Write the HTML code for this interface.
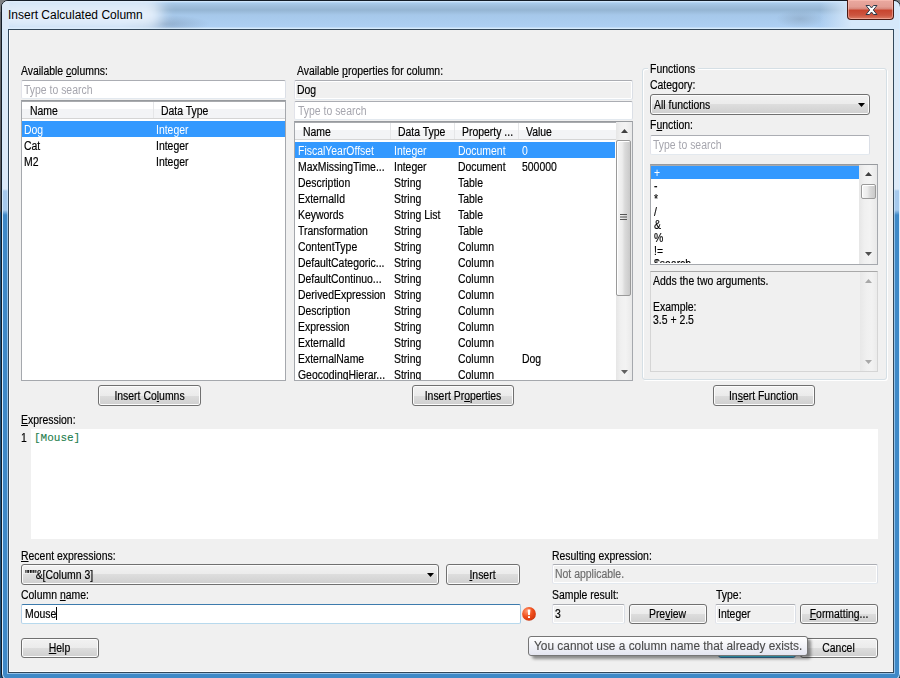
<!DOCTYPE html>
<html><head><meta charset="utf-8">
<style>
html,body{margin:0;padding:0;width:900px;height:678px;overflow:hidden;position:relative;background:linear-gradient(to bottom,#6b6d70 0,#55585c 211px,#1b4f7a 213px,#1b4f7a 100%);}
*{box-sizing:border-box;}
.a{position:absolute;}
.t{position:absolute;font-family:"Liberation Sans",sans-serif;font-size:12px;line-height:14px;white-space:nowrap;color:#000;transform:scaleX(.87);transform-origin:0 0;margin-top:-1px;-webkit-text-stroke:0.18px currentColor;}
.u{text-decoration:underline;}
.ph{color:#a6a6ae;-webkit-text-stroke:0;}
.tb{position:absolute;background:#fff;border:1px solid;border-color:#abadb3 #dbdfe6 #e3e9ef #e2e3ea;border-radius:2px;}
.ro{background:#f0f0f0;box-shadow:inset 0 0 0 1px #fff;}
.lst{position:absolute;background:#fff;border:1px solid #a5a8ad;border-top-color:#979a9e;box-shadow:inset 0 1px 0 #a9abae;}
.hdr{position:absolute;background:linear-gradient(to bottom,#ffffff 0,#ffffff 7px,#f3f4f6 7px,#f3f4f6 100%);border-bottom:1px solid #d5d5d5;}
.hdiv{position:absolute;top:0;width:1px;height:100%;background:#e5e6e8;}
.sel{position:absolute;background:#3399ff;}
.w{color:#fff;-webkit-text-stroke:0;}
.btn{position:absolute;border:1px solid #707070;border-radius:3px;background:linear-gradient(to bottom,#f2f2f2 0%,#ebebeb 50%,#dddddd 50%,#cfcfcf 100%);box-shadow:inset 0 0 0 1px #fcfcfc;}
.btn .t{left:0;right:0;text-align:center;transform-origin:50% 0;}
.sb{position:absolute;background:linear-gradient(to right,#e6e6e6 0,#f0f0f0 30%,#f3f3f3 60%,#e9e9e9 100%);}
</style></head><body>

<!-- window frame -->
<div class="a" style="left:0;top:0;width:12px;height:12px;background:#7d7f82"></div>
<div class="a" style="right:0;top:0;width:12px;height:12px;background:#7d7f82"></div>
<div class="a" id="frame" style="left:1px;top:0;width:900px;height:681px;border:1px solid #141c26;border-radius:7px 7px 7px 7px;background:linear-gradient(to bottom,#dce9f7 0,#dce9f7 188px,#a6c9ec 190px,#a6c9ec 209px,#3f89c7 214px,#3f89c7 100%);box-shadow:inset 0 0 0 1px #d6ecff;"></div>
<!-- title bar -->
<div class="a" style="left:8px;top:1px;width:884px;height:28px;background:linear-gradient(to bottom,#dceeff 0,#a9cbeb 2px,#a0bfdd 5px,#95b5d3 9px,#a6c8ea 14px,#adcff3 26px,#d5e8fa 27px,#d5e8fa 28px);"></div>
<div class="a" style="left:110px;top:12px;width:110px;height:17px;background:radial-gradient(ellipse 45px 9px at 55px 12px,rgba(90,110,135,0.32) 0,rgba(100,120,145,0.18) 50%,rgba(120,140,160,0) 100%);"></div>
<div class="a" style="left:0px;top:0px;width:240px;height:30px;overflow:hidden;clip-path:inset(1px 0 1px 2px round 6px 0 0 0)"><div class="a" style="left:-6px;top:-2px;width:168px;height:32px;border-radius:14px;background:rgba(233,242,252,0.92);filter:blur(7px)"></div></div>
<div class="a" style="left:760px;top:4px;width:80px;height:24px;background:radial-gradient(ellipse 24px 9px at 40px 15px,rgba(110,130,150,0.3) 0,rgba(120,140,160,0) 100%);"></div>
<div class="a" style="left:2px;top:1px;width:7px;height:28px;border-radius:6px 0 0 0;background:#dde9f7"></div>
<div class="a" style="left:820px;top:1px;width:79px;height:28px;border-radius:0 6px 0 0;background:linear-gradient(to right,rgba(214,232,250,0) 0,#d6e8fa 40%,#d6e8fa 100%)"></div>
<div class="t" style="left:8px;top:9px;font-size:12px;color:#000;line-height:15px;transform:none;-webkit-text-stroke:0">Insert Calculated Column</div>
<!-- close button -->
<div class="a" style="left:847px;top:0;width:47px;height:20px;border:1px solid #4a1a14;border-top:none;border-radius:0 0 4px 4px;background:linear-gradient(to bottom,#eaa9a0 0,#e39d93 35%,#d98a7e 45%,#c8452f 55%,#cc5540 80%,#dc7d66 100%);box-shadow:inset 0 0 0 1px rgba(255,200,190,0.5);"></div>
<svg class="a" style="left:864px;top:4px" width="15" height="12" viewBox="0 0 15 12">
<path d="M2 1.5 L5.5 1.5 L7.5 4 L9.5 1.5 L13 1.5 L9.3 6 L13 10.5 L9.5 10.5 L7.5 8 L5.5 10.5 L2 10.5 L5.7 6 Z" fill="#fff" stroke="#2d3a4a" stroke-width="1" stroke-linejoin="round"/>
</svg>

<!-- client area -->
<div class="a" style="left:8px;top:29px;width:886px;height:644px;background:#f0f0f0;border:1px solid #33475a;box-shadow:inset 1px -1px 0 #fdfdfd, 0 0 0 1px rgba(215,236,255,0.55);"></div>

<!-- LEFT PANEL -->
<div class="t" style="left:21px;top:65px">Available <span class="u">c</span>olumns:</div>
<div class="tb" style="left:21px;top:80px;width:265px;height:19px"></div>
<div class="t ph" style="left:24px;top:84px">Type to search</div>
<div class="lst" style="left:21px;top:100px;width:265px;height:281px">
  <div class="hdr" style="left:0px;top:1px;width:263px;height:17px"><div class="hdiv" style="left:131px"></div></div>
  <div class="sel" style="left:0px;top:20px;width:263px;height:16px"></div>
</div>
<div class="t" style="left:30px;top:105px">Name</div>
<div class="t" style="left:161px;top:105px">Data Type</div>
<div class="t w" style="left:24px;top:124px">Dog</div>
<div class="t w" style="left:156px;top:124px">Integer</div>
<div class="t" style="left:24px;top:140px">Cat</div>
<div class="t" style="left:156px;top:140px">Integer</div>
<div class="t" style="left:24px;top:156px">M2</div>
<div class="t" style="left:156px;top:156px">Integer</div>
<div class="btn" style="left:98px;top:385px;width:103px;height:21px"><div class="t" style="top:4px">Insert Co<span class="u">l</span>umns</div></div>

<!-- MIDDLE PANEL -->
<div class="t" style="left:297px;top:65px">Available <span class="u">p</span>roperties for column:</div>
<div class="tb ro" style="left:294px;top:80px;width:339px;height:20px"></div>
<div class="t" style="left:297px;top:84px">Dog</div>
<div class="tb" style="left:294px;top:101px;width:339px;height:19px"></div>
<div class="t ph" style="left:298px;top:105px">Type to search</div>
<div id="plist" class="lst" style="left:294px;top:121px;width:339px;height:260px"></div>
<div class="hdr" style="left:295px;top:123px;width:321px;height:17px"></div>

<div class="hdiv" style="left:390px;top:123px;height:16px"></div>
<div class="hdiv" style="left:454px;top:123px;height:16px"></div>
<div class="hdiv" style="left:518px;top:123px;height:16px"></div>
<div class="t" style="left:303px;top:126px">Name</div>
<div class="t" style="left:398px;top:126px">Data Type</div>
<div class="t" style="left:462px;top:126px">Property ...</div>
<div class="t" style="left:526px;top:126px">Value</div>
<div class="a" style="left:0;top:0;width:900px;height:678px;clip-path:inset(123px 285px 298px 295px)">
<div class="sel" style="left:295px;top:142px;width:321px;height:16px"></div>
<div class="t w" style="left:298px;top:145px">FiscalYearOffset</div>
<div class="t w" style="left:394px;top:145px">Integer</div>
<div class="t w" style="left:458px;top:145px">Document</div>
<div class="t w" style="left:522px;top:145px">0</div>
<div class="t" style="left:298px;top:161px">MaxMissingTime...</div>
<div class="t" style="left:394px;top:161px">Integer</div>
<div class="t" style="left:458px;top:161px">Document</div>
<div class="t" style="left:522px;top:161px">500000</div>
<div class="t" style="left:298px;top:177px">Description</div>
<div class="t" style="left:394px;top:177px">String</div>
<div class="t" style="left:458px;top:177px">Table</div>
<div class="t" style="left:298px;top:193px">ExternalId</div>
<div class="t" style="left:394px;top:193px">String</div>
<div class="t" style="left:458px;top:193px">Table</div>
<div class="t" style="left:298px;top:209px">Keywords</div>
<div class="t" style="left:394px;top:209px">String List</div>
<div class="t" style="left:458px;top:209px">Table</div>
<div class="t" style="left:298px;top:225px">Transformation</div>
<div class="t" style="left:394px;top:225px">String</div>
<div class="t" style="left:458px;top:225px">Table</div>
<div class="t" style="left:298px;top:241px">ContentType</div>
<div class="t" style="left:394px;top:241px">String</div>
<div class="t" style="left:458px;top:241px">Column</div>
<div class="t" style="left:298px;top:257px">DefaultCategoric...</div>
<div class="t" style="left:394px;top:257px">String</div>
<div class="t" style="left:458px;top:257px">Column</div>
<div class="t" style="left:298px;top:273px">DefaultContinuo...</div>
<div class="t" style="left:394px;top:273px">String</div>
<div class="t" style="left:458px;top:273px">Column</div>
<div class="t" style="left:298px;top:289px">DerivedExpression</div>
<div class="t" style="left:394px;top:289px">String</div>
<div class="t" style="left:458px;top:289px">Column</div>
<div class="t" style="left:298px;top:305px">Description</div>
<div class="t" style="left:394px;top:305px">String</div>
<div class="t" style="left:458px;top:305px">Column</div>
<div class="t" style="left:298px;top:321px">Expression</div>
<div class="t" style="left:394px;top:321px">String</div>
<div class="t" style="left:458px;top:321px">Column</div>
<div class="t" style="left:298px;top:337px">ExternalId</div>
<div class="t" style="left:394px;top:337px">String</div>
<div class="t" style="left:458px;top:337px">Column</div>
<div class="t" style="left:298px;top:353px">ExternalName</div>
<div class="t" style="left:394px;top:353px">String</div>
<div class="t" style="left:458px;top:353px">Column</div>
<div class="t" style="left:522px;top:353px">Dog</div>
<div class="t" style="left:298px;top:369px">GeocodingHierar...</div>
<div class="t" style="left:394px;top:369px">String</div>
<div class="t" style="left:458px;top:369px">Column</div>
</div>
<!-- scrollbar -->
<div class="sb" style="left:616px;top:122px;width:16px;height:258px"></div>
<svg class="a" style="left:621px;top:129px" width="7" height="4"><path d="M0 4 L3.5 0 L7 4 Z" fill="#404040"/></svg>
<div class="a" style="left:616px;top:140px;width:15px;height:156px;border:1px solid #9a9a9a;border-radius:2px;background:linear-gradient(to right,#f6f6f6 0,#ececec 40%,#dadada 60%,#c9c9c9 100%);box-shadow:inset 1px 1px 0 #fff"></div>
<svg class="a" style="left:620px;top:214px" width="8" height="7"><path d="M0 0.5H7M0 3H7M0 5.5H7" stroke="#555" stroke-width="1.2"/></svg>
<svg class="a" style="left:621px;top:370px" width="7" height="4"><path d="M0 0 L7 0 L3.5 4 Z" fill="#606060"/></svg>


<!-- FUNCTIONS GROUP -->
<div class="a" style="left:642px;top:68px;width:245px;height:312px;border:1px solid #d5dfe5;border-radius:3px;box-shadow:inset 1px 1px 0 #fff, 1px 1px 0 #fff"></div>
<div class="a" style="left:648px;top:62px;width:50px;height:10px;background:#f0f0f0"></div>
<div class="t" style="left:650px;top:63px">Functions</div>
<div class="t" style="left:650px;top:79px">Cate<span class="u">g</span>ory:</div>
<div class="a" style="left:650px;top:94px;width:220px;height:21px;border:1px solid #707070;border-radius:3px;background:linear-gradient(to bottom,#f2f2f2 0%,#ebebeb 50%,#dddddd 50%,#cfcfcf 100%);box-shadow:inset 0 0 0 1px #fcfcfc;"></div>
<div class="t" style="left:654px;top:99px">All functions</div>
<svg class="a" style="left:858px;top:103px" width="7" height="4"><path d="M0 0 H7 L3.5 4 Z" fill="#000"/></svg>
<div class="t" style="left:650px;top:119px">F<span class="u">u</span>nction:</div>
<div class="tb" style="left:650px;top:135px;width:220px;height:20px"></div>
<div class="t ph" style="left:653px;top:139px">Type to search</div>
<div id="flist" class="lst" style="left:650px;top:164px;width:228px;height:101px"></div>
<div class="sel" style="left:651px;top:166px;width:208px;height:13px"></div>
<div class="a" style="left:0;top:0;width:900px;height:678px;clip-path:inset(165px 41px 414px 651px)">
<div class="t w" style="left:654px;top:167px">+</div>
<div class="t" style="left:654px;top:180px">-</div>
<div class="t" style="left:654px;top:193px">*</div>
<div class="t" style="left:654px;top:206px">/</div>
<div class="t" style="left:654px;top:219px">&amp;</div>
<div class="t" style="left:654px;top:232px">%</div>
<div class="t" style="left:654px;top:245px">!=</div>
<div class="t" style="left:654px;top:258px">$search</div>
</div>
<div class="a" style="left:651px;top:263px;width:208px;height:1px;background:#fff"></div>
<div class="sb" style="left:859px;top:165px;width:18px;height:99px"></div>
<svg class="a" style="left:865px;top:172px" width="7" height="4"><path d="M0 4 L3.5 0 L7 4 Z" fill="#404040"/></svg>
<div class="a" style="left:861px;top:184px;width:15px;height:15px;border:1px solid #9a9a9a;border-radius:2px;background:linear-gradient(to right,#f6f6f6 0,#ececec 40%,#dadada 60%,#c9c9c9 100%);box-shadow:inset 1px 1px 0 #fff"></div>
<svg class="a" style="left:865px;top:252px" width="7" height="4"><path d="M0 0 L7 0 L3.5 4 Z" fill="#505050"/></svg>

<div id="fdesc" class="a" style="left:650px;top:271px;width:228px;height:101px;border:1px solid #d5d5d5;border-top-color:#a9a9a9;background:#f0f0f0"></div>
<div class="a" style="left:860px;top:272px;width:17px;height:99px;background:linear-gradient(to right,#e8e8e8 0,#f0f0f0 40%,#f2f2f2 70%,#ebebeb 100%)"></div>
<svg class="a" style="left:865px;top:279px" width="7" height="4"><path d="M0 4 L3.5 0 L7 4 Z" fill="#a8a8a8"/></svg>
<svg class="a" style="left:865px;top:360px" width="7" height="4"><path d="M0 0 L7 0 L3.5 4 Z" fill="#a8a8a8"/></svg>
<div class="t" style="left:653px;top:275px">Adds the two arguments.</div>
<div class="t" style="left:653px;top:301px">Example:</div>
<div class="t" style="left:653px;top:314px">3.5 + 2.5</div>

<div class="btn" style="left:713px;top:385px;width:102px;height:21px"><div class="t" style="top:4px;margin-left:-1px">In<span class="u">s</span>ert Function</div></div>
<div class="btn" style="left:412px;top:385px;width:102px;height:21px"><div class="t" style="top:4px">Insert Pr<span class="u">o</span>perties</div></div>

<!-- EXPRESSION -->
<div class="t" style="left:21px;top:414px"><span class="u">E</span>xpression:</div>
<div class="a" style="left:31px;top:429px;width:847px;height:110px;background:#fff"></div>

<div class="t" style="left:21px;top:432px;color:#000">1</div>
<div class="t" style="left:34px;top:432px;font-family:'Liberation Mono',monospace;font-size:11px;transform:none;-webkit-text-stroke:0.1px currentColor;color:#1d7d4c">[Mouse]</div>

<!-- BOTTOM -->
<div class="t" style="left:21px;top:550px"><span class="u">R</span>ecent expressions:</div>
<div class="a" style="left:21px;top:564px;width:418px;height:21px;border:1px solid #707070;border-radius:3px;background:linear-gradient(to bottom,#f2f2f2 0%,#ebebeb 50%,#dddddd 50%,#cfcfcf 100%);box-shadow:inset 0 0 0 1px #fcfcfc;"></div>
<div class="t" style="left:25px;top:569px"><span style="letter-spacing:-1.2px">""""</span>&amp;[Column 3]</div>
<svg class="a" style="left:427px;top:573px" width="7" height="4"><path d="M0 0 H7 L3.5 4 Z" fill="#000"/></svg>
<div class="btn" style="left:446px;top:564px;width:74px;height:21px"><div class="t" style="top:4px;margin-left:-1px"><span class="u">I</span>nsert</div></div>
<div class="t" style="left:21px;top:589px">Column <span class="u">n</span>ame:</div>
<div class="a" style="left:21px;top:604px;width:500px;height:20px;background:#fff;border:1px solid;border-color:#3d7bad #a4c9e3 #b7d9ed #b5cfe7;border-radius:2px"></div>
<div class="t" style="left:25px;top:608px">Mouse</div>
<div class="a" style="left:56px;top:607px;width:1px;height:13px;background:#000"></div>
<svg class="a" style="left:521px;top:606px" width="16" height="16" viewBox="0 0 16 16">
<defs><radialGradient id="eg" cx="0.35" cy="0.3" r="0.8"><stop offset="0" stop-color="#ff9870"/><stop offset="0.5" stop-color="#f0501e"/><stop offset="0.85" stop-color="#d83a10"/><stop offset="1" stop-color="#9a2a10"/></radialGradient></defs>
<circle cx="8" cy="7.9" r="6.9" fill="url(#eg)"/>
<path d="M6.6 3.6 H9.4 L8.9 9 H7.1 Z" fill="#fff"/><rect x="7" y="10.2" width="2" height="1.8" fill="#fff"/>
</svg>

<div class="t" style="left:552px;top:550px">Resulting expression:</div>
<div class="tb ro" style="left:552px;top:564px;width:326px;height:20px"></div>
<div class="t" style="left:555px;top:568px;color:#6d6d6d">Not applicable.</div>
<div class="t" style="left:552px;top:589px">Sample result:</div>
<div class="tb ro" style="left:552px;top:604px;width:73px;height:20px"></div>
<div class="t" style="left:555px;top:608px">3</div>
<div class="btn" style="left:629px;top:604px;width:78px;height:20px"><div class="t" style="top:3px;margin-left:-1px">Pre<span class="u">v</span>iew</div></div>
<div class="t" style="left:716px;top:589px">Type:</div>
<div class="tb ro" style="left:715px;top:604px;width:81px;height:20px"></div>
<div class="t" style="left:718px;top:608px">Integer</div>
<div class="btn" style="left:800px;top:604px;width:78px;height:20px"><div class="t" style="top:3px"><span class="u">F</span>ormatting...</div></div>

<div class="btn" style="left:21px;top:638px;width:78px;height:20px"><div class="t" style="top:3px;margin-left:-1px"><span class="u">H</span>elp</div></div>
<div class="btn" style="left:718px;top:638px;width:78px;height:20px;border-color:#3c7fb1;box-shadow:inset 0 0 0 1px #48dbfa"></div>
<div class="btn" style="left:800px;top:638px;width:78px;height:20px"><div class="t" style="top:3px;margin-left:-1px">Cancel</div></div>

<!-- tooltip -->
<div class="a" style="left:532px;top:639px;width:279px;height:20px;border-radius:3px;background:rgba(0,0,0,0.42);filter:blur(1.6px)"></div>
<div class="a" style="left:528px;top:636px;width:280px;height:20px;border:1px solid #767676;border-radius:3px;background:linear-gradient(to bottom,#ffffff 0,#e4e5f0 100%)"></div>
<div class="t" style="left:534px;top:640px;font-size:12px;transform:scaleX(.99);-webkit-text-stroke:0.1px currentColor;color:#4a4a4a;line-height:14px">You cannot use a column name that already exists.</div>
</body></html>
